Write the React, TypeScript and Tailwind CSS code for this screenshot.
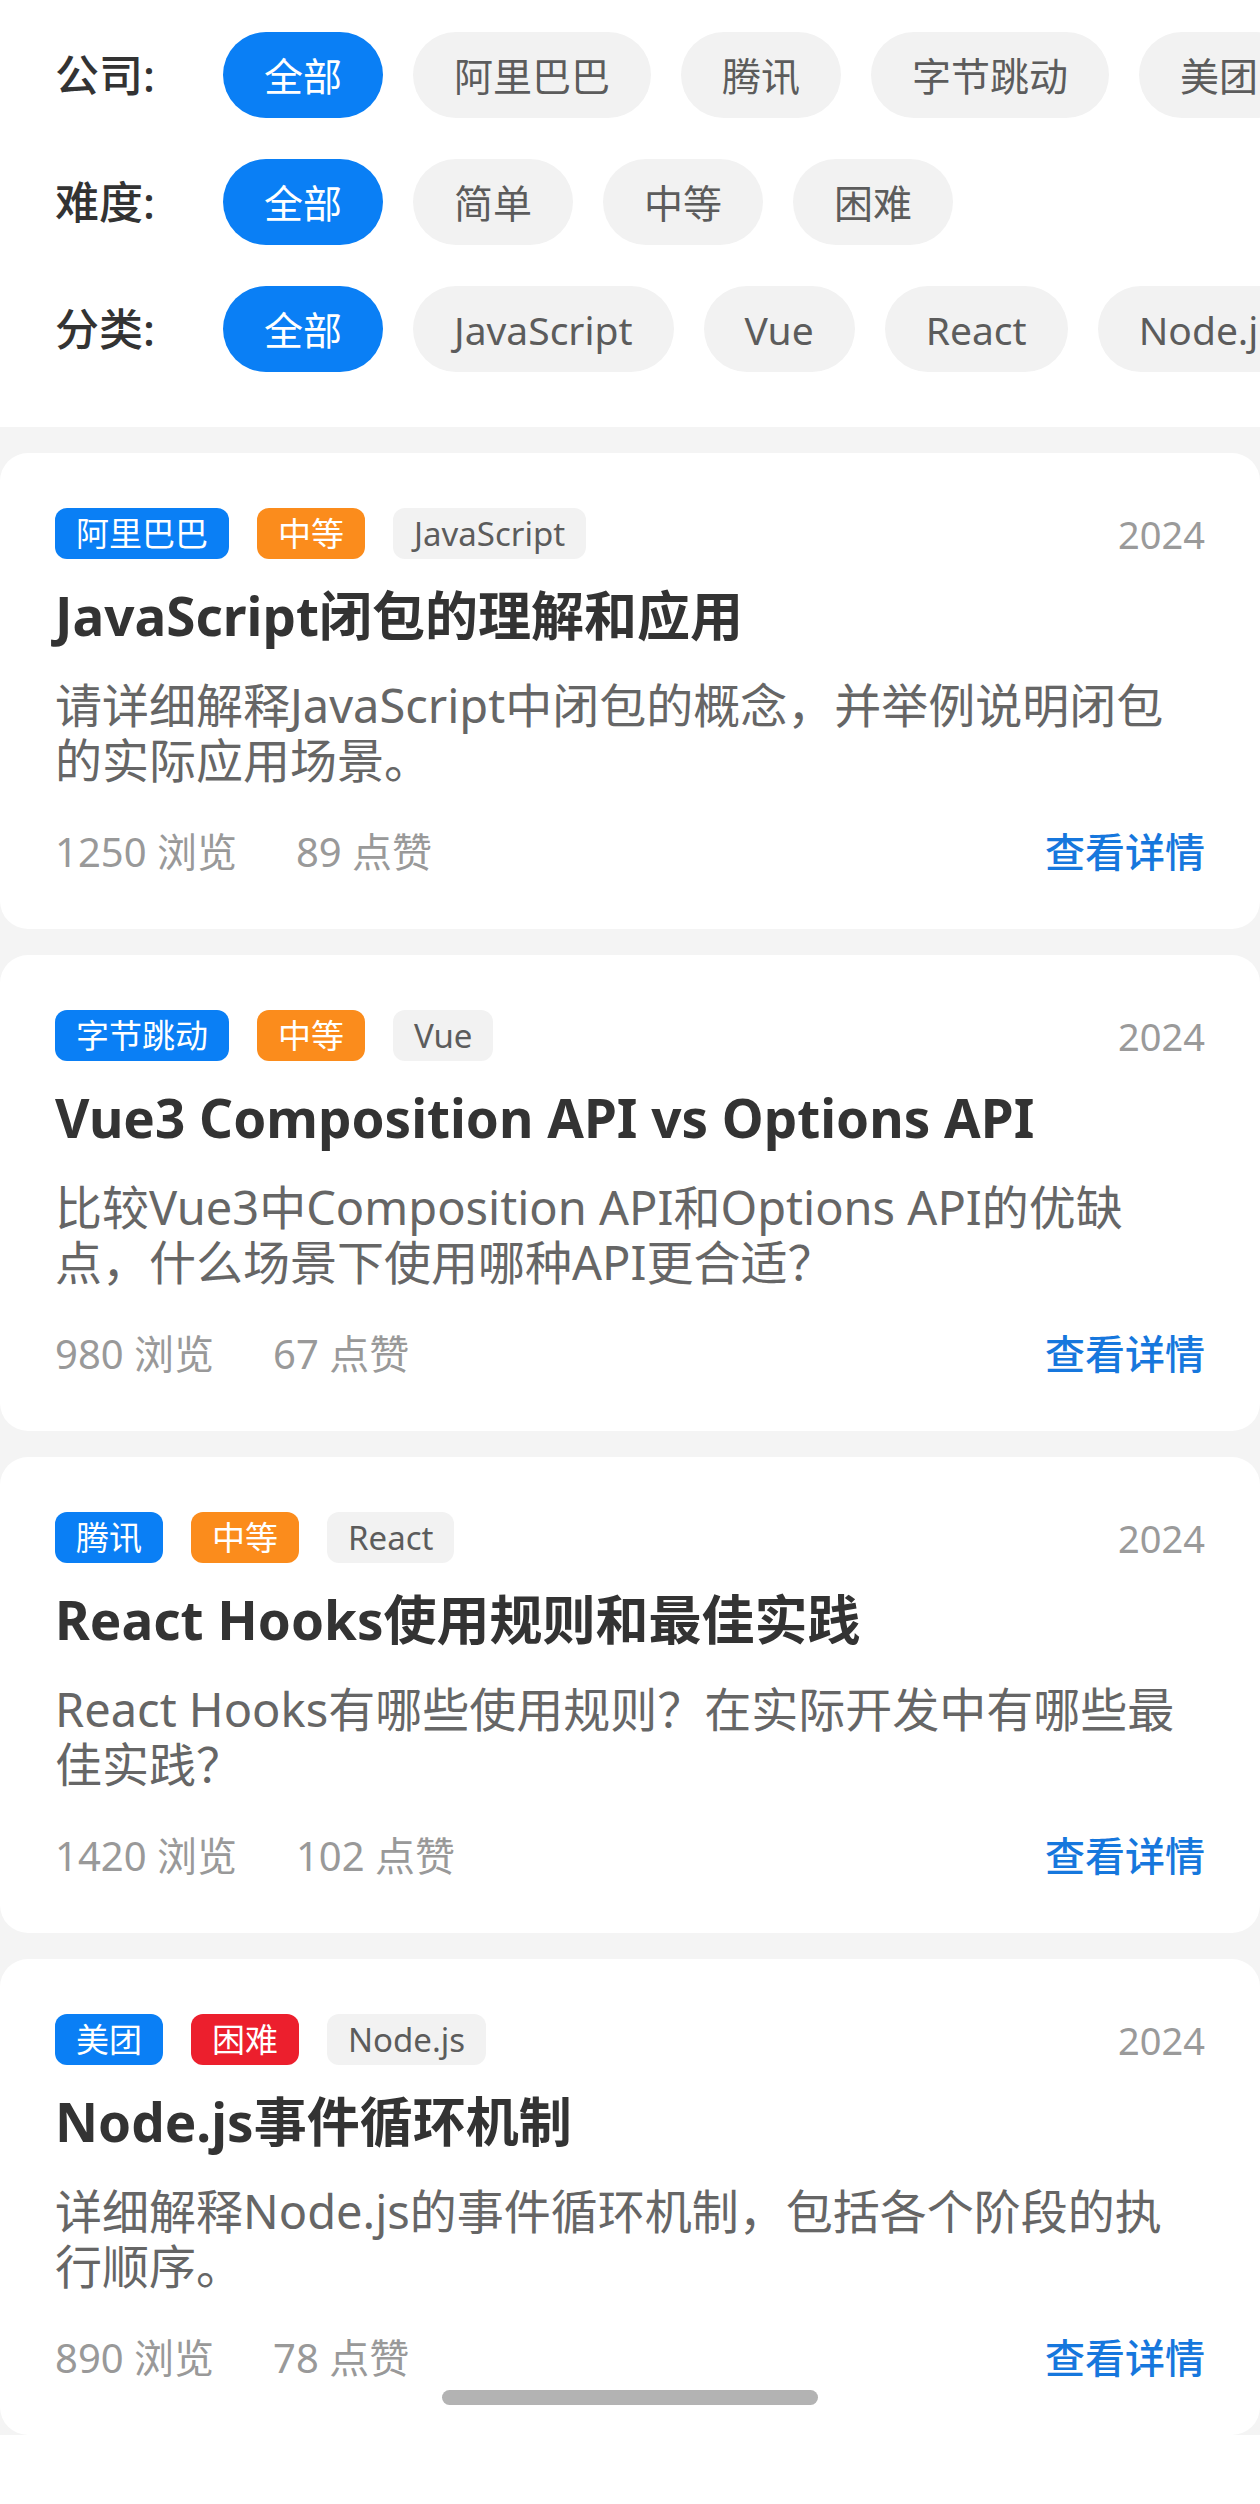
import React from "react";

type Q = {
  company: string;
  level: string;
  levelColor: string;
  cat: string;
  title: string;
  desc: string[];
  views: number;
  likes: number;
};

const questions: Q[] = [
  {
    company: "阿里巴巴",
    level: "中等",
    levelColor: "bg-[#fb8c1c]",
    cat: "JavaScript",
    title: "JavaScript闭包的理解和应用",
    desc: ["请详细解释JavaScript中闭包的概念，并举例说明闭包", "的实际应用场景。"],
    views: 1250,
    likes: 89,
  },
  {
    company: "字节跳动",
    level: "中等",
    levelColor: "bg-[#fb8c1c]",
    cat: "Vue",
    title: "Vue3 Composition API vs Options API",
    desc: ["比较Vue3中Composition API和Options API的优缺", "点，什么场景下使用哪种API更合适？"],
    views: 980,
    likes: 67,
  },
  {
    company: "腾讯",
    level: "中等",
    levelColor: "bg-[#fb8c1c]",
    cat: "React",
    title: "React Hooks使用规则和最佳实践",
    desc: ["React Hooks有哪些使用规则？在实际开发中有哪些最", "佳实践？"],
    views: 1420,
    likes: 102,
  },
  {
    company: "美团",
    level: "困难",
    levelColor: "bg-[#ec1f2d]",
    cat: "Node.js",
    title: "Node.js事件循环机制",
    desc: ["详细解释Node.js的事件循环机制，包括各个阶段的执", "行顺序。"],
    views: 890,
    likes: 78,
  },
];

const filters: { label: string; items: string[] }[] = [
  { label: "公司:", items: ["全部", "阿里巴巴", "腾讯", "字节跳动", "美团"] },
  { label: "难度:", items: ["全部", "简单", "中等", "困难"] },
  { label: "分类:", items: ["全部", "JavaScript", "Vue", "React", "Node.js"] },
];

function FilterRow({ label, items }: { label: string; items: string[] }) {
  return (
    <div className="flex items-center whitespace-nowrap">
      <div className="w-[223px] shrink-0 pl-[55px] text-[44px] font-medium text-[#333] leading-none">
        {label}
      </div>
      <div className="flex gap-[30px]">
        {items.map((it, i) => (
          <div
            key={it}
            className={
              "h-[86px] shrink-0 px-[41px] rounded-full flex items-center text-[39px] leading-none " +
              (i === 0 ? "bg-[#0a7ff5] text-white" : "bg-[#f2f2f2] text-[#5c5c5c]")
            }
          >
            {it}
          </div>
        ))}
      </div>
    </div>
  );
}

function Card({ q }: { q: Q }) {
  return (
    <div className="bg-white rounded-[28px] px-[55px] pt-[55px] pb-[49px]">
      <div className="flex items-center justify-between h-[51px]">
        <div className="flex gap-[28px]">
          <span className="h-[51px] px-[21px] rounded-[12px] bg-[#0a7ff5] text-white text-[33px] leading-none flex items-center">
            {q.company}
          </span>
          <span
            className={
              "h-[51px] px-[21px] rounded-[12px] text-white text-[33px] leading-none flex items-center " +
              q.levelColor
            }
          >
            {q.level}
          </span>
          <span className="h-[51px] px-[21px] rounded-[12px] bg-[#f2f2f2] text-[#5c5c5c] text-[33px] leading-none flex items-center">
            {q.cat}
          </span>
        </div>
        <span className="text-[38px] text-[#9a9a9a] leading-none">2024</span>
      </div>
      <div className="mt-[22px] text-[53px] leading-[70px] font-bold text-[#333] whitespace-nowrap">
        {q.title}
      </div>
      <div className="mt-[27px] text-[47px] leading-[55px] text-[#666]">
        {q.desc.map((d, i) => (
          <div key={i} className="whitespace-nowrap">
            {d}
          </div>
        ))}
      </div>
      <div className="mt-[36px] h-[56px] flex items-center justify-between">
        <div className="flex gap-[59px] text-[40px] text-[#999] leading-none">
          <span>{q.views} 浏览</span>
          <span>{q.likes} 点赞</span>
        </div>
        <span className="text-[40px] font-medium text-[#1677dd] leading-none">查看详情</span>
      </div>
    </div>
  );
}

export default function App() {
  return (
    <div className="relative w-[1260px] overflow-hidden bg-white font-['Noto_Sans','Noto_Sans_CJK_SC',sans-serif]">
      <div className="bg-white pt-[32px] pb-[55px] flex flex-col gap-[41px]">
        {filters.map((f) => (
          <FilterRow key={f.label} label={f.label} items={f.items} />
        ))}
      </div>
      <div className="bg-[#f4f4f4] pt-[26px] flex flex-col gap-[26px]">
        {questions.map((q) => (
          <Card key={q.title} q={q} />
        ))}
      </div>
      <div className="absolute left-[442px] top-[2390px] w-[376px] h-[15px] rounded-full bg-[#b3b3b3]" />
    </div>
  );
}
